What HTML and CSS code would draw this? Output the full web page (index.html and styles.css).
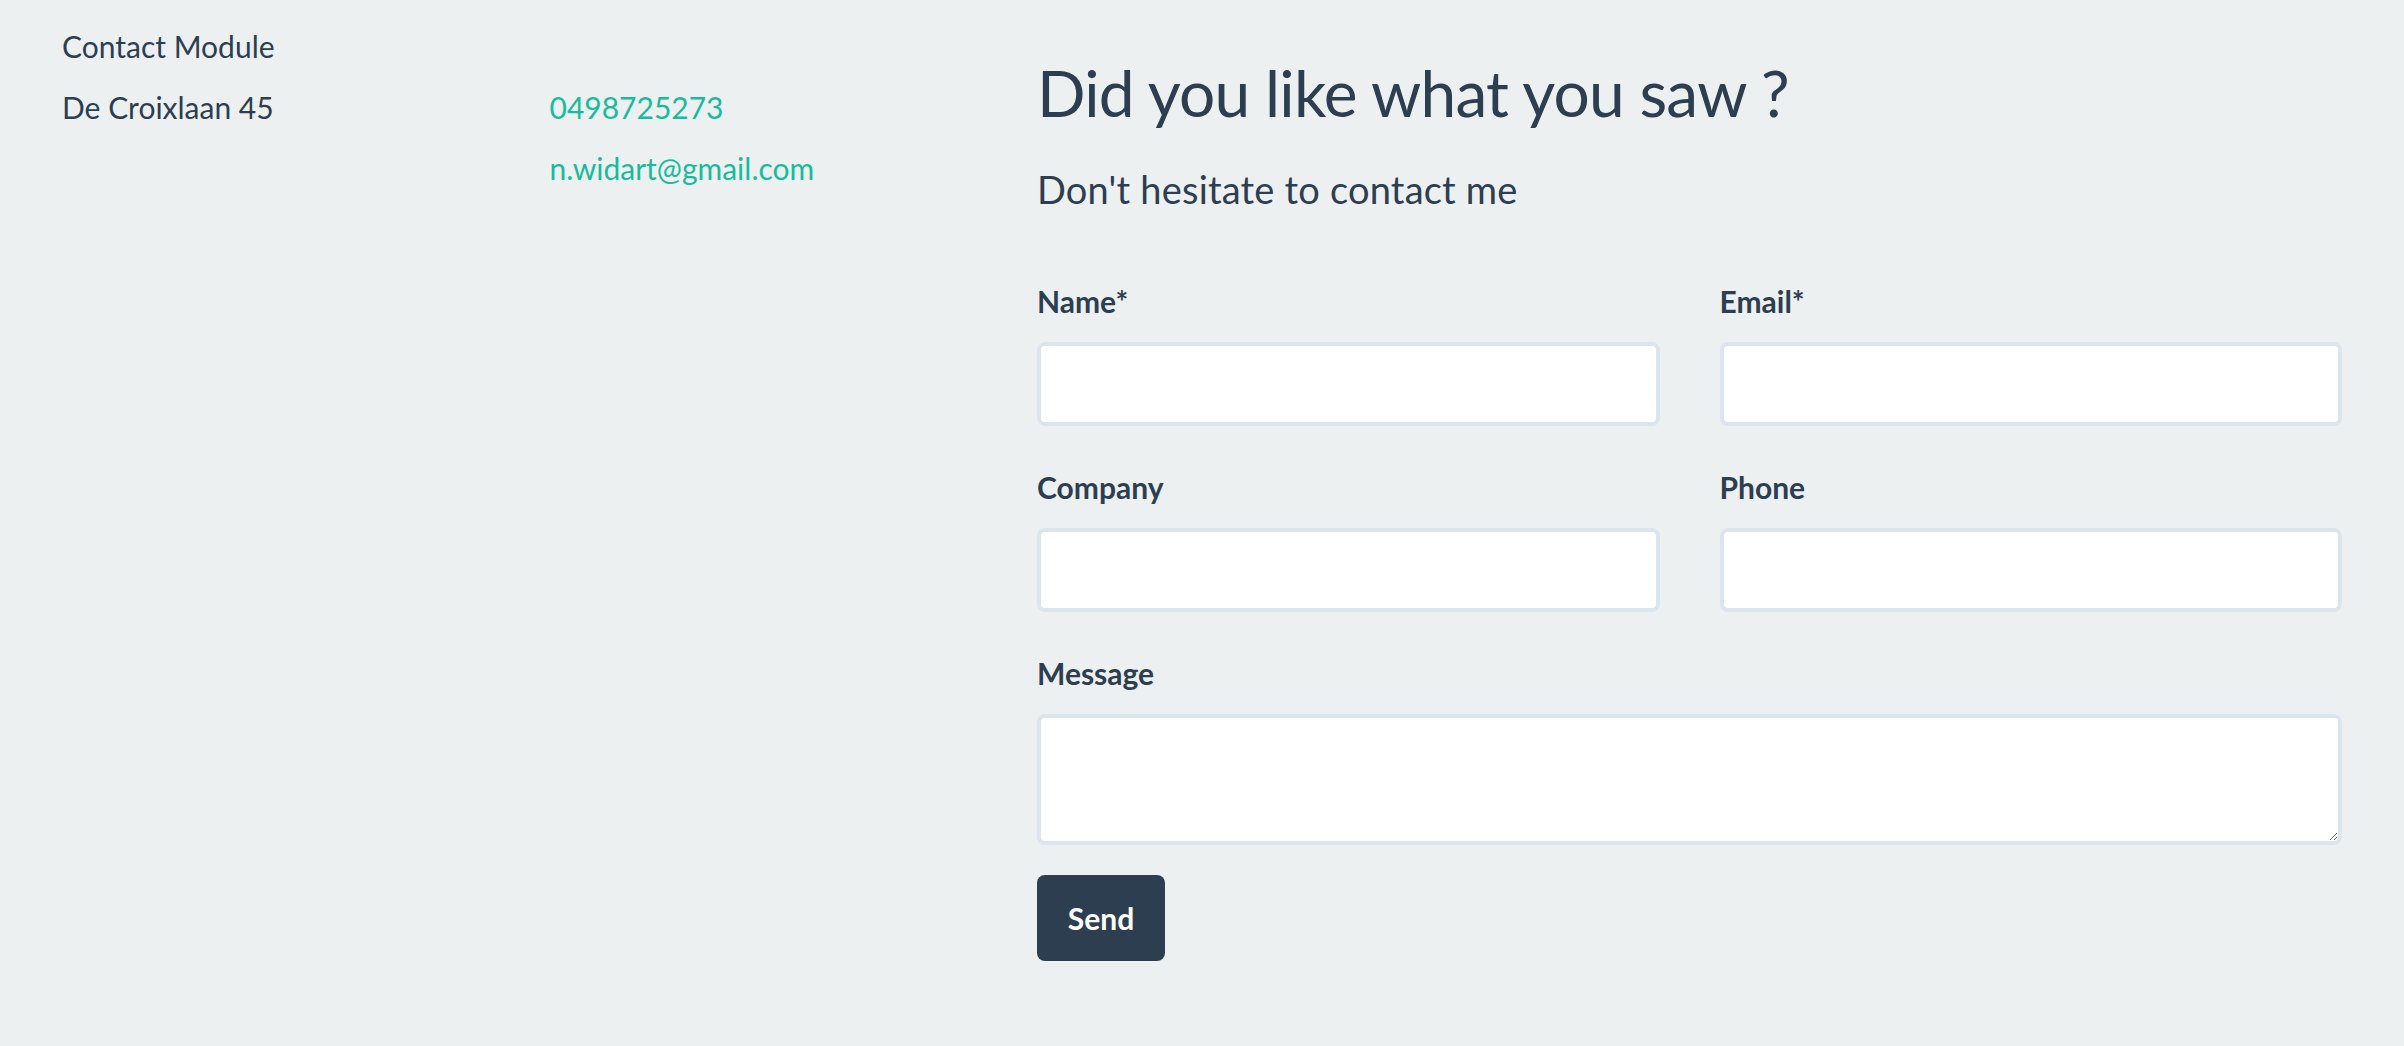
FILE: index.html
```html
<!DOCTYPE html>
<html lang="en">
<head>
<meta charset="utf-8">
<title>Contact Module</title>
<link rel="stylesheet" href="styles.css">
</head>
<body>
<div class="container">
  <div class="col-left">
    <p class="module-title">Contact Module</p>
    <div class="info">
      <div class="info-col">
        <p class="info-line">De Croixlaan 45</p>
      </div>
      <div class="info-col">
        <a class="info-line link" href="#">0498725273</a>
        <a class="info-line link" href="#">n.widart@gmail.com</a>
      </div>
    </div>
  </div>
  <div class="col-right">
    <h2 class="heading">Did you like what you saw ?</h2>
    <h4 class="subheading">Don't hesitate to contact me</h4>
    <form class="contact-form">
      <div class="form-group">
        <label class="form-label">Name*</label>
        <input class="form-control" type="text">
      </div>
      <div class="form-group">
        <label class="form-label">Email*</label>
        <input class="form-control" type="email">
      </div>
      <div class="form-group">
        <label class="form-label">Company</label>
        <input class="form-control" type="text">
      </div>
      <div class="form-group">
        <label class="form-label">Phone</label>
        <input class="form-control" type="text">
      </div>
      <div class="form-group form-group-wide">
        <label class="form-label">Message</label>
        <textarea class="form-control form-textarea"></textarea>
      </div>
      <div class="form-actions">
        <button class="btn-send" type="button">Send</button>
      </div>
    </form>
  </div>
</div>
</body>
</html>
```

FILE: styles.css
```css
* {
  box-sizing: border-box;
}

html, body {
  margin: 0;
  padding: 0;
  background: #ecf0f1;
}

body {
  font-family: Lato, "Open Sans", "Liberation Sans", sans-serif;
  font-size: 30px;
  line-height: 42px;
  color: #2c3e50;
  min-height: 1046px;
}

.container {
  width: 2340px;
  margin: 0 auto;
  display: grid;
  grid-template-columns: 975px 1365px;
}

.col-left {
  padding: 25px 30px 0;
}

.col-right {
  padding: 0 30px;
}

.module-title {
  margin: 0 0 19px;
}

.info {
  display: grid;
  grid-template-columns: 1fr 1fr;
  column-gap: 60px;
}

.info-col {
  display: flex;
  flex-direction: column;
  align-items: flex-start;
}

.info-line {
  display: block;
  margin: 0 0 19px;
}

.link {
  color: #18bc9c;
  text-decoration: none;
}

.heading {
  margin: 58px 0 0;
  font-size: 64px;
  line-height: 70px;
  font-weight: 400;
  letter-spacing: -0.8px;
}

.subheading {
  margin: 40px 0 0;
  font-size: 38px;
  line-height: 42px;
  font-weight: 400;
  letter-spacing: 0.2px;
}

.contact-form {
  margin-top: 70px;
  display: grid;
  grid-template-columns: 1fr 1fr;
  column-gap: 60px;
}

.form-group {
  margin-bottom: 40px;
  display: flex;
  flex-direction: column;
}

.form-group-wide {
  grid-column: 1 / -1;
  margin-bottom: 30px;
}

.form-label {
  display: block;
  font-weight: 700;
  font-size: 30px;
  line-height: 42px;
  margin-bottom: 20px;
}

.form-control {
  display: block;
  width: 100%;
  height: 84px;
  border: 4px solid #dce4ec;
  border-radius: 8px;
  background: #ffffff;
  font-family: inherit;
  font-size: 30px;
  padding: 16px 24px;
  color: #2c3e50;
  outline: none;
}

.form-textarea {
  height: 131px;
  resize: both;
}

.form-actions {
  grid-column: 1 / -1;
}

.btn-send {
  width: 128px;
  height: 86px;
  border: none;
  border-radius: 8px;
  background: #2c3e50;
  color: #ffffff;
  font-family: inherit;
  font-size: 30px;
  font-weight: 700;
  line-height: 42px;
  padding: 0;
  cursor: pointer;
}
```
